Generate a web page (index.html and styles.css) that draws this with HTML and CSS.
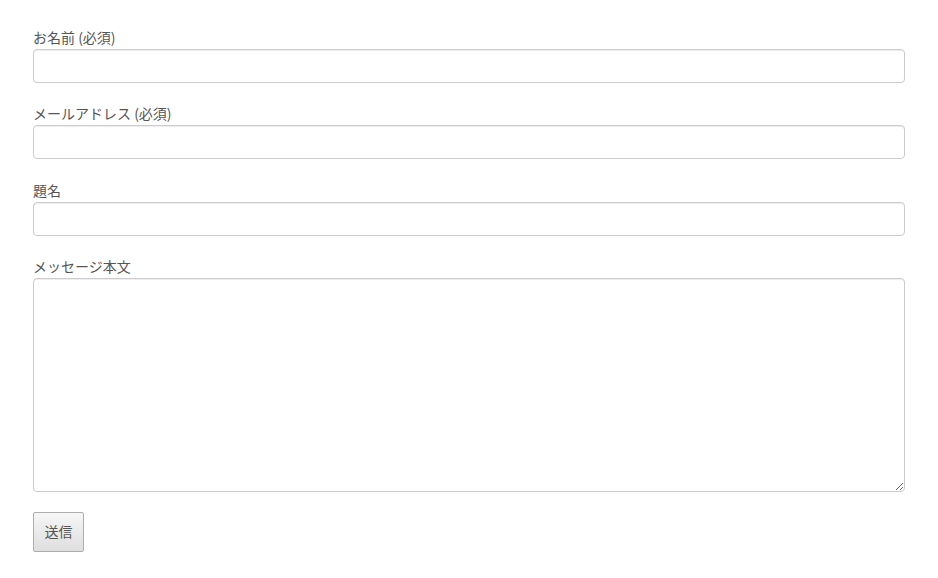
FILE: index.html
```html
<!DOCTYPE html>
<html lang="ja">
<head>
    <meta charset="UTF-8">
    <meta name="viewport" content="width=device-width, initial-scale=1.0">
    <title>お問い合わせ</title>
    <link rel="stylesheet" href="styles.css">
</head>
<body>
    <form class="contact-form">
        <div class="form-group">
            <label class="form-label" for="name">お名前 (必須)</label>
            <input class="form-input" type="text" id="name">
        </div>
        <div class="form-group">
            <label class="form-label" for="email">メールアドレス (必須)</label>
            <input class="form-input" type="email" id="email">
        </div>
        <div class="form-group">
            <label class="form-label" for="subject">題名</label>
            <input class="form-input" type="text" id="subject">
        </div>
        <div class="form-group">
            <label class="form-label" for="message">メッセージ本文</label>
            <textarea class="form-input form-textarea" id="message"></textarea>
        </div>
        <button class="submit-button" type="button">送信</button>
    </form>
</body>
</html>
```

FILE: styles.css
```css
body {
    margin: 0;
    padding: 27px 33px;
    font-family: "Noto Sans CJK JP", "Noto Sans", sans-serif;
    font-size: 14px;
    color: #555;
    background-color: #fff;
}
.contact-form {
    display: flex;
    flex-direction: column;
    align-items: flex-start;
}
.form-group {
    display: flex;
    flex-direction: column;
    width: 100%;
    margin-bottom: 20.33px;
}
.form-label {
    line-height: 20px;
    margin-bottom: 2px;
}
.form-input {
    box-sizing: border-box;
    width: 100%;
    height: 34px;
    margin: 0;
    padding: 6px 12px;
    font-family: inherit;
    font-size: 14px;
    color: #555;
    border: 1px solid #ccc;
    border-radius: 4px;
    box-shadow: inset 0 1px 1px rgba(0, 0, 0, 0.075);
    background-color: #fff;
}
.form-textarea {
    height: 214px;
    resize: vertical;
}
.submit-button {
    box-sizing: border-box;
    width: 51px;
    height: 40px;
    padding: 0 0 2px;
    font-family: inherit;
    font-size: 14px;
    color: #555;
    border: 1px solid #adadad;
    border-radius: 2px;
    background: linear-gradient(#f6f6f6, #dedede);
    cursor: pointer;
}
```
